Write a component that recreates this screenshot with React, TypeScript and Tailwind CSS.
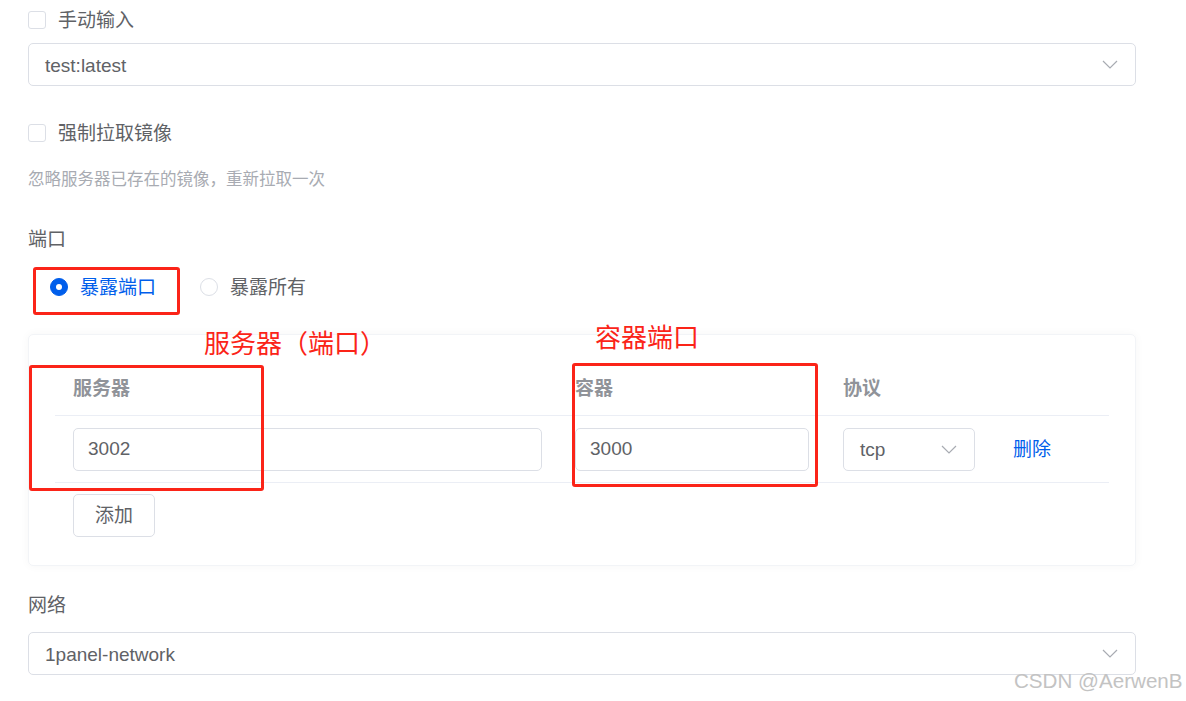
import React, { useState } from 'react';

const FONT = '"Liberation Sans", "Noto Sans CJK SC", sans-serif';

// Thin chevron used by every select
const Chevron: React.FC = () => (
  <svg width="16" height="9" viewBox="0 0 16 9" fill="none">
    <path d="M1 1l7 7 7-7" stroke="#a8abb2" strokeWidth="1.2" />
  </svg>
);

const Checkbox: React.FC<{ label: string }> = ({ label }) => (
  <label className="flex h-[40px] items-center">
    <span className="h-[18px] w-[18px] rounded-[3px] border border-[#dcdfe6] bg-white" />
    <span className="ml-[12px] pt-[2px] text-[19px] text-[#606266]">{label}</span>
  </label>
);

const Select: React.FC<{ value: string; className?: string }> = ({ value, className }) => (
  <div
    className={`flex h-[43px] items-center justify-between rounded-[5px] border border-[#dcdfe6] bg-white pl-[16px] pr-[17px] text-[19px] text-[#606266] ${className || ''}`}
  >
    <span className="pt-[3px]">{value}</span>
    <Chevron />
  </div>
);

const App: React.FC = () => {
  const [mode, setMode] = useState<'expose' | 'all'>('expose');

  return (
    <div className="relative h-[701px] w-[1186px] overflow-hidden bg-white" style={{ fontFamily: FONT }}>
      <div className="pl-[28px]" style={{ width: 1136 }}>
        <Checkbox label="手动输入" />
        <Select value="test:latest" className="mt-[3px]" />

        <div className="mt-[27px]">
          <Checkbox label="强制拉取镜像" />
        </div>
        <p className="mt-[13px] h-[24px] pt-[1px] text-[16.5px] leading-[24px] text-[#a8abb2]">
          忽略服务器已存在的镜像，重新拉取一次
        </p>

        {/* Ports */}
        <div className="mt-[36px] h-[24px] pt-[2px] text-[19px] leading-[24px] text-[#606266]">端口</div>
        <div className="mt-[17px] flex h-[40px] items-center pl-[22px]">
          <button type="button" className="flex items-center" onClick={() => setMode('expose')}>
            <span
              className={`flex h-[18px] w-[18px] items-center justify-center rounded-full border ${
                mode === 'expose' ? 'border-[#005eeb] bg-[#005eeb]' : 'border-[#dcdfe6] bg-white'
              }`}
            >
              {mode === 'expose' && <span className="h-[6px] w-[6px] rounded-full bg-white" />}
            </span>
            <span className={`ml-[12px] pt-[2px] text-[19px] ${mode === 'expose' ? 'text-[#005eeb]' : 'text-[#606266]'}`}>
              暴露端口
            </span>
          </button>
          <button type="button" className="ml-[44px] flex items-center" onClick={() => setMode('all')}>
            <span
              className={`flex h-[18px] w-[18px] items-center justify-center rounded-full border ${
                mode === 'all' ? 'border-[#005eeb] bg-[#005eeb]' : 'border-[#dcdfe6] bg-white'
              }`}
            >
              {mode === 'all' && <span className="h-[6px] w-[6px] rounded-full bg-white" />}
            </span>
            <span className={`ml-[12px] pt-[2px] text-[19px] ${mode === 'all' ? 'text-[#005eeb]' : 'text-[#606266]'}`}>
              暴露所有
            </span>
          </button>
        </div>

        {/* Port table card */}
        <div className="mt-[27px] h-[232px] rounded-[5px] border border-[#f2f4f7] px-[26px] pt-[26px] shadow-[0_0_10px_rgba(0,0,0,0.04)]">
          <div className="grid h-[55px] grid-cols-[502px_270px_168px_1fr] items-center border-b border-[#ebeef5] pt-[2px] text-[19px] font-bold text-[#909399]">
            <div className="pl-[18px]">服务器</div>
            <div className="pl-[18px]">容器</div>
            <div className="pl-[16px]">协议</div>
            <div />
          </div>
          <div className="grid h-[67px] grid-cols-[502px_270px_168px_1fr] items-center border-b border-[#ebeef5]">
            <div className="pl-[18px] pr-[15px]">
              <div className="flex h-[43px] items-center rounded-[5px] border border-[#dcdfe6] px-[14px] pt-[1px] text-[19px] text-[#606266]">
                3002
              </div>
            </div>
            <div className="pl-[18px]">
              <div className="flex h-[43px] w-[234px] items-center rounded-[5px] border border-[#dcdfe6] px-[14px] pt-[1px] text-[19px] text-[#606266]">
                3000
              </div>
            </div>
            <div className="pl-[16px]">
              <Select value="tcp" className="w-[132px] pl-[15px]" />
            </div>
            <div className="pl-[18px] pt-[2px] text-[19px] text-[#005eeb]">删除</div>
          </div>
          <button
            type="button"
            className="ml-[18px] mt-[11px] h-[43px] w-[82px] rounded-[5px] border border-[#dcdfe6] bg-white pt-[2px] text-[19px] text-[#606266]"
          >
            添加
          </button>
        </div>

        {/* Network */}
        <div className="mt-[25px] h-[24px] pt-[3px] text-[19px] leading-[24px] text-[#606266]">网络</div>
        <Select value="1panel-network" className="mt-[17px]" />
      </div>

      {/* Red annotations drawn over the screenshot */}
      <div className="absolute left-[33px] top-[267px] h-[48px] w-[147px] rounded-[3px] border-[3px] border-[#fb2418]" />
      <div className="absolute left-[29px] top-[365px] h-[126px] w-[235px] rounded-[3px] border-[3px] border-[#fb2418]" />
      <div className="absolute left-[572px] top-[363px] h-[124px] w-[246px] rounded-[3px] border-[3px] border-[#fb2418]" />
      <div className="absolute left-[204px] top-[328px] text-[26px] leading-[32px] text-[#fb2418]">服务器（端口）</div>
      <div className="absolute left-[595px] top-[322px] text-[26px] leading-[32px] text-[#fb2418]">容器端口</div>

      <div className="absolute left-[1014px] top-[669px] text-[20.6px] leading-[24px] text-[#c3c3c3]">CSDN @AerwenB</div>
    </div>
  );
};

export default App;
